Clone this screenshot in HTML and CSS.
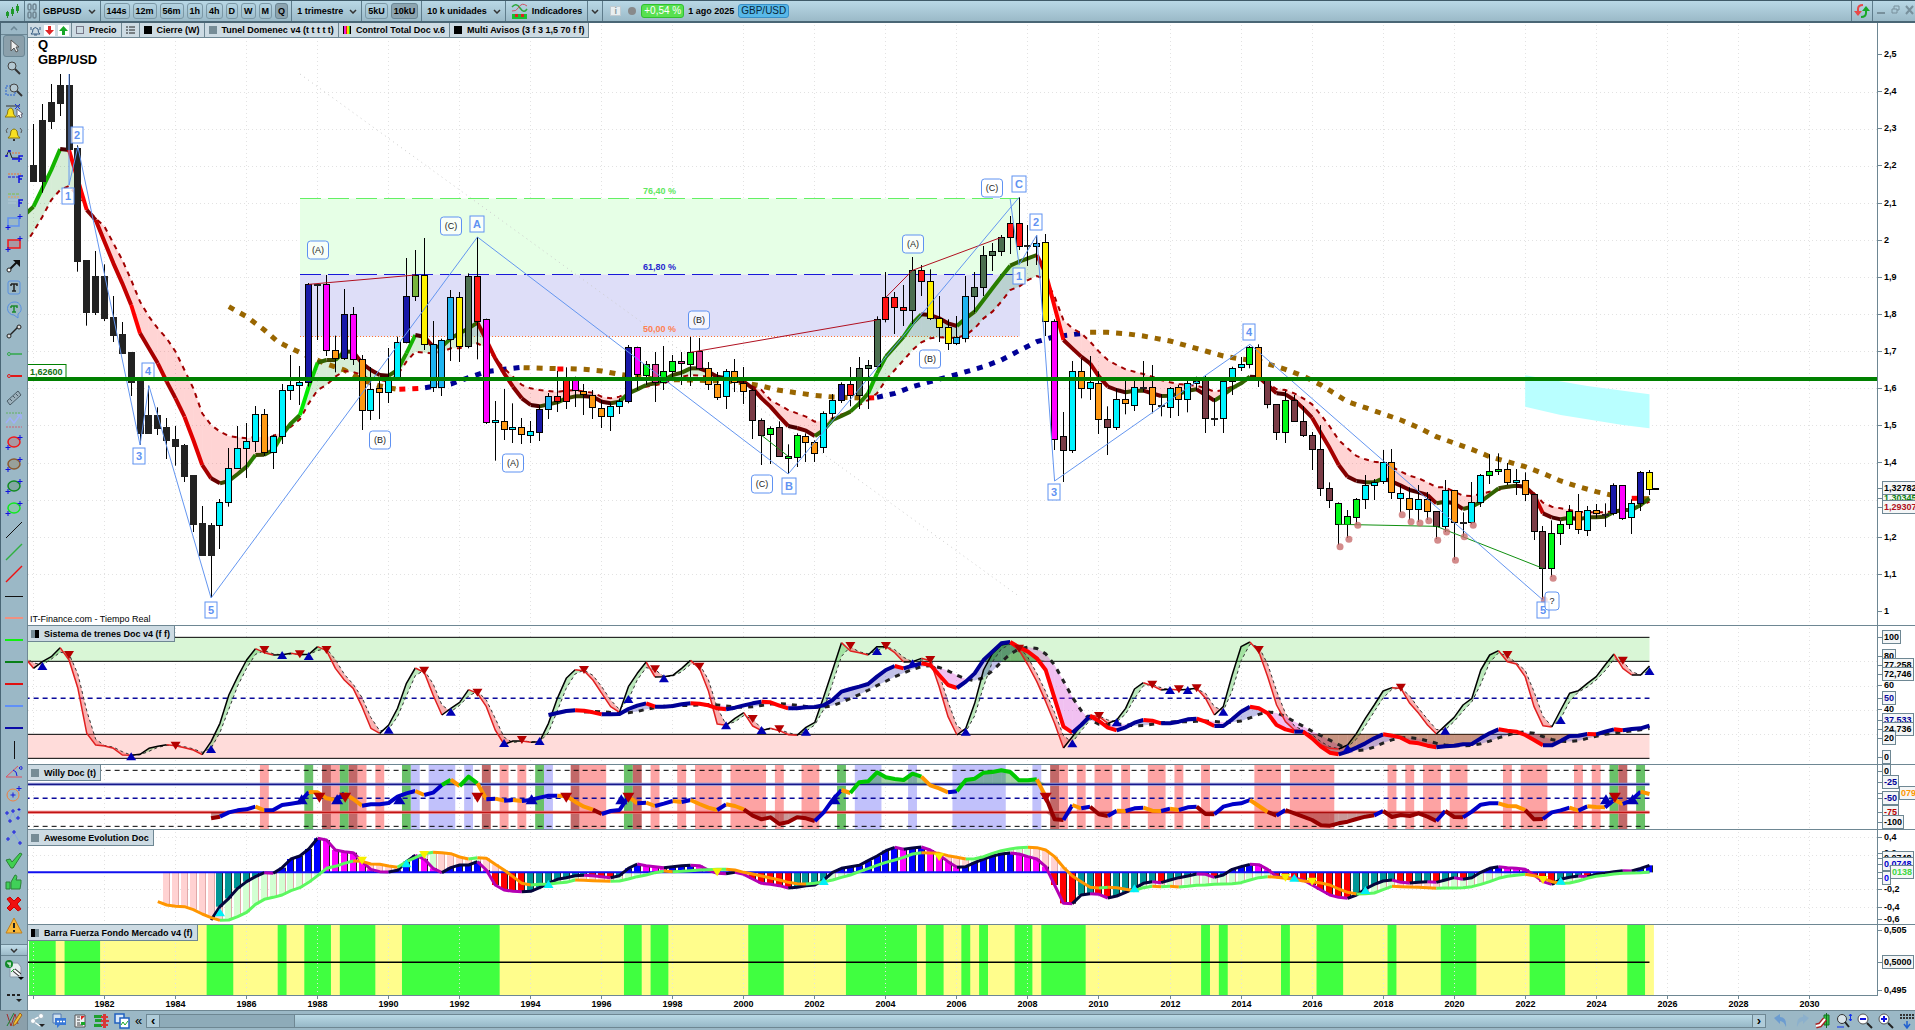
FILE: index.html
```html
<!DOCTYPE html>
<html lang="es">
<head>
    <meta charset="UTF-8">
    <meta name="viewport" content="width=device-width, initial-scale=1.0">
    <title>GBPUSD - 1 trimestre</title>
    <link rel="stylesheet" href="styles.css">
</head>
<body>

<!-- Top toolbar -->
<header class="toolbar">
    <button class="tool-cell type" aria-label="Tipo de gráfico"><svg width="16" height="16"><path d="M3.500 8v7M8.500 4v9M13.500 1v9" stroke="#2a8a2a"/><path d="M2 9h3v4H2zM7 6h3v5H7zM12 3h3v5h-3z" fill="#1f9a2c"/></svg></button>
    <button class="tool-cell link" aria-label="Vincular"><svg width="10" height="16"><g fill="none" stroke="#6f8592" stroke-width="1.500"><rect x="1" y="1" width="3" height="6" rx="1.500"/><rect x="6" y="1" width="3" height="6" rx="1.500"/><rect x="1" y="9" width="3" height="6" rx="1.500"/><rect x="6" y="9" width="3" height="6" rx="1.500"/></g></svg></button>
    <button class="tool-cell drop symbol">GBPUSD<svg class="chev"><path d="M1 1l3 3 3-3"/></svg></button>
    <div class="group frames">
        <button>144s</button><button>12m</button><button>56m</button><button>1h</button><button>4h</button><button>D</button><button>W</button><button>M</button><button class="on">Q</button>
    </div>
    <button class="tool-cell drop">1 trimestre<svg class="chev"><path d="M1 1l3 3 3-3"/></svg></button>
    <div class="group units"><button>5kU</button><button class="on">10kU</button></div>
    <button class="tool-cell drop">10 k unidades<svg class="chev"><path d="M1 1l3 3 3-3"/></svg></button>
    <button class="tool-cell indicators"><svg width="17" height="18"><path d="M1 5q4-5 8 1t7 1" fill="none" stroke="#2ea83c" stroke-width="1.500"/><path d="M1 9q4 1 7-4t8-1" fill="none" stroke="#d05060"/><path d="M1 12h15v5H1z" fill="#18c030"/><path d="M4 12h3v3H4zM10 12h3v3h-3z" fill="#e02020"/></svg>Indicadores</button>
    <button class="tool-cell arrow" aria-label="Más indicadores"><svg class="chev"><path d="M1 1l3 3 3-3"/></svg></button>
    <span class="info">i</span>
    <span class="dot"></span>
    <span class="change">+0,54 %</span>
    <span class="date">1 ago 2025</span>
    <span class="pair">GBP/USD</span>
    <span class="spacer"></span>
    <button class="tool-cell refresh" aria-label="Actualizar"><svg width="16" height="16"><path d="M4 9V6q0-4 5-4" fill="none" stroke="#e84848" stroke-width="2"/><path d="M0 8h8l-4 5z" fill="#e84848"/><path d="M12 7v3q0 4-5 4" fill="none" stroke="#18a828" stroke-width="2"/><path d="M8 8h8l-4-5z" fill="#18a828"/></svg></button>
    <div class="window-buttons">
        <button aria-label="Minimizar"><svg width="9" height="10"><path d="M0 8h8" stroke-width="2"/></svg></button>
        <button aria-label="Restaurar"><svg width="9" height="10"><path d="M3 4V1h5v4H6M1 4h5v4H1z"/></svg></button>
        <button aria-label="Cerrar"><svg width="9" height="10"><path d="M1 1l7 8M8 1L1 9" stroke-width="2"/></svg></button>
    </div>
</header>

<main class="workspace">
    <!-- Drawing tools -->
    <aside class="sidebar">
        <button class="scroll-up" aria-label="Subir"><svg class="chev"><path d="M1 4l3-3 3 3"/></svg></button>
        <div class="tools">
            <button class="on" aria-label="Cursor"><svg><path d="M6 3v11l3-3 2 4 2-1-2-4h3z" fill="#eee" stroke="#555"/></svg></button>
            <button aria-label="Lupa"><svg><circle cx="7" cy="7" r="4" fill="#b4c8d2" stroke="#444"/><path d="M10 10l5 5" stroke="#333" stroke-width="2"/></svg></button>
            <button aria-label="Zoom de zona"><svg><path d="M1 5h9v9H1z" fill="none" stroke="#2860d0" stroke-dasharray="2 1"/><circle cx="9" cy="7" r="4" fill="#b4c8d2" stroke="#444"/><path d="M12 10l5 5" stroke="#333" stroke-width="2"/></svg></button>
            <button aria-label="Alerta con cursor"><svg><path d="M0 14q3-2 3-7 3-4 5 0 0 5 3 7z" fill="#f8e020" stroke="#8a7810"/><path d="M1 3h14" stroke="#333"/><path d="M10 1l5 5M15 1l-5 5" stroke="#1a30e0"/><path d="M12 6v8l2-2 1 3 2-1-1-3h2z" fill="#fff" stroke="#667"/></svg></button>
            <button aria-label="Alerta"><svg><path d="M3 13q3-2 3-7 3-4 6 0 0 5 3 7z" fill="#f8e020" stroke="#8a7810"/><path d="M8 14h2v2H8z" fill="#333"/><path d="M3 3q-3 2-1 5M15 3q3 2 1 5" fill="none" stroke="#555"/></svg></button>
            <button aria-label="Fibonacci extensión"><svg><path d="M1 10L4 3l3 8h7" fill="none" stroke="#222"/><path d="M0 9h3M3 4h3M7 12h6" stroke="#1010e0" stroke-width="1.500"/><path d="M7 6h9" stroke="#f07030" stroke-dasharray="2 1"/><path d="M14 15V9h4M14 12h3" fill="none" stroke="#1010e0" stroke-width="1.500"/></svg></button>
            <button aria-label="Fibonacci retroceso"><svg><path d="M3 5h13" stroke="#f07030" stroke-dasharray="2 1"/><path d="M3 8h11" stroke="#1010e0" stroke-dasharray="3 1"/><path d="M14 14V7h4M14 10h3" fill="none" stroke="#1010e0" stroke-width="1.500"/></svg></button>
            <button aria-label="Fibonacci zonas"><svg><path d="M3 3h12" stroke="#80c040" stroke-dasharray="3 1"/><path d="M3 6h12" stroke="#f0a050" stroke-dasharray="2 1"/><path d="M3 9h10M3 12h8" stroke="#b0c8d4"/><path d="M14 16V9h4M14 12h3" fill="none" stroke="#1010e0" stroke-width="1.500"/></svg></button>
            <button aria-label="Rectángulo azul"><svg><path d="M3 5h11v8H3z" fill="none" stroke="#6090f0" stroke-width="1.500"/><path d="M15 1v5M12.500 3.500h5M3 12v5M.5 14.500h5" stroke="#1010e0"/></svg></button>
            <button aria-label="Rectángulo rojo"><svg><path d="M3 5h12v8H3z" fill="#a89aa4" stroke="#f01818" stroke-width="1.500"/><path d="M15 1v5M12.500 3.500h5M3 12v5M.5 14.500h5" stroke="#1010e0"/></svg></button>
            <button aria-label="Flecha"><svg><path d="M4 13l9-9" stroke="#111" stroke-width="2"/><path d="M8 3h7v7z" fill="#111"/><circle cx="4" cy="13" r="2" fill="#fff" stroke="#222"/></svg></button>
            <button aria-label="Texto"><svg><rect x="3" y="2" width="12" height="13" rx="2" fill="none" stroke="#5890e0"/><path d="M6 5h6v2M9 5v7M7 12h4M6 5v2" fill="none" stroke="#222" stroke-width="1.500"/></svg></button>
            <button aria-label="Comentario"><svg><path d="M9 1a6.500 6.500 0 0 1 4 12v4l-4-3A6.500 6.500 0 0 1 9 1z" fill="none" stroke="#5890e0"/><path d="M6 5h6v2M9 5v6M7 11h4M6 5v2" fill="none" stroke="#1c8a2c" stroke-width="1.500"/></svg></button>
            <button aria-label="Segmento"><svg><path d="M5 12l8-8" stroke="#222" stroke-width="1.500"/><circle cx="4" cy="13" r="2" fill="#ddd" stroke="#222"/><circle cx="14" cy="4" r="2" fill="#ddd" stroke="#222"/></svg></button>
            <button aria-label="Semirrecta verde"><svg><circle cx="4" cy="9" r="1.500" fill="none" stroke="#30a848"/><path d="M6 9h11" stroke="#30a848" stroke-width="1.500"/></svg></button>
            <button aria-label="Semirrecta roja"><svg><circle cx="4" cy="9" r="1.500" fill="none" stroke="#e01818"/><path d="M6 9h11" stroke="#e01818" stroke-width="2"/></svg></button>
            <button aria-label="Regla"><svg><path d="M2 12L13 2l3 4L5 16z" fill="#9cb0bb" stroke="#4a5c66"/><path d="M5 10l2 2M8 7l2 2M11 5l2 2" stroke="#4a5c66"/></svg></button>
            <button aria-label="Canal"><svg><path d="M1 2h16" stroke="#60b060" stroke-dasharray="2 1"/><path d="M1 16h16" stroke="#d06070" stroke-dasharray="2 1"/><path d="M1 12l4-5 4 5 6-8M12 4h4v4" fill="none" stroke="#a0b0f8" stroke-width="1.500"/></svg></button>
            <button aria-label="Elipse roja"><svg><ellipse cx="9" cy="9" rx="6" ry="5" fill="#a89aa2" stroke="#f01818" stroke-width="1.500"/><path d="M15 2v5M12.500 4.500h5M3 12v5M.5 14.500h5" stroke="#1010e0"/></svg></button>
            <button aria-label="Elipse marrón"><svg><ellipse cx="9" cy="9" rx="6" ry="5" fill="#98a09a" stroke="#8a5830" stroke-width="1.500"/><path d="M15 2v5M12.500 4.500h5M3 12v5M.5 14.500h5" stroke="#1010e0"/></svg></button>
            <button aria-label="Elipse verde"><svg><ellipse cx="9" cy="9" rx="6" ry="5" fill="#84a8a4" stroke="#108a20" stroke-width="1.500"/><path d="M15 2v5M12.500 4.500h5M3 12v5M.5 14.500h5" stroke="#1010e0"/></svg></button>
            <button aria-label="Elipse lima"><svg><ellipse cx="9" cy="9" rx="6" ry="5" fill="#8cc4ac" stroke="#10e820" stroke-width="1.500"/><path d="M15 2v5M12.500 4.500h5M3 12v5M.5 14.500h5" stroke="#1010e0"/></svg></button>
            <button aria-label="Línea negra"><svg><path d="M1 17L17 1" stroke="#111"/></svg></button>
            <button aria-label="Línea verde"><svg><path d="M1 17L17 1" stroke="#30b040" stroke-width="1.500"/></svg></button>
            <button aria-label="Línea roja"><svg><path d="M1 17L17 1" stroke="#f01010" stroke-width="1.500"/></svg></button>
            <button aria-label="Horizontal negra"><svg><path d="M0 9.500h18" stroke="#111"/></svg></button>
            <button aria-label="Horizontal salmón"><svg><path d="M0 9h18" stroke="#f09080" stroke-width="2"/></svg></button>
            <button aria-label="Horizontal lima"><svg><path d="M0 9h18" stroke="#10f010" stroke-width="2"/></svg></button>
            <button aria-label="Horizontal verde"><svg><path d="M0 9h18" stroke="#088018" stroke-width="2"/></svg></button>
            <button aria-label="Horizontal roja"><svg><path d="M0 9h18" stroke="#e01010" stroke-width="2"/></svg></button>
            <button aria-label="Horizontal azul"><svg><path d="M0 9h18" stroke="#6090f8" stroke-width="2"/></svg></button>
            <button aria-label="Horizontal marino"><svg><path d="M0 9h18" stroke="#0a0aa8" stroke-width="2"/></svg></button>
            <button aria-label="Vertical"><svg><path d="M9.500 0v18" stroke="#111"/></svg></button>
            <button aria-label="Ángulo"><svg><path d="M13 3L1 14h16" fill="none" stroke="#e05060"/><path d="M8 7q4 1 4 6M14 5q3-3 3 0t-3 0" fill="none" stroke="#1818e0"/></svg></button>
            <button aria-label="Ciclo"><svg><circle cx="8" cy="10" r="6" fill="none" stroke="#f08040"/><path d="M8 7.500v5M5.500 10h5M14 1v5M11.500 3.500h5" stroke="#1818e0"/></svg></button>
            <button aria-label="Ondas de Elliott"><svg><path d="M1 7l3 6 4-9 3 9 5-10" fill="none" stroke="#88a8e0"/><path d="M2 4v4M0 6h4M8 2v4M6 4h4M14 1v3M12.500 2.500h3M5 12v4M3 14h4M13 9v4M11 11h4" stroke="#1818e0"/></svg></button>
            <button aria-label="Ondas abc"><svg><path d="M1 13L9 4l6 10" fill="none" stroke="#88a8e0"/><path d="M3 8v4M1 10h4M9 1v4M7 3h4M15 12v4M13 14h4" stroke="#1818e0"/></svg></button>
            <button aria-label="Correcto"><svg><path d="M1 9l4-1 2 3 8-9 2 1-9 14H6z" fill="#40d050" stroke="#2c8038"/></svg></button>
            <button aria-label="Me gusta"><svg><path d="M1 9h4v7H1zM6 9l4-7q3 0 1 5h5v3l-1 6H6z" fill="#40d058" stroke="#2c8038"/></svg></button>
            <button aria-label="Borrar"><svg><path d="M2 4l3-2 4 4 4-4 3 3-4 4 4 5-3 2-4-4-4 4-3-3 4-4z" fill="#f01010" stroke="#c00"/></svg></button>
            <button aria-label="Aviso"><svg><path d="M9 1l8 15H1z" fill="#f8b838" stroke="#c08020"/><path d="M9 6v5M9 13v2" stroke="#222" stroke-width="2"/></svg></button>
            <button aria-label="Subida"><svg><path d="M9 5l5 6H4z" fill="#18b028"/></svg></button>
        </div>
        <button class="scroll-down" aria-label="Bajar"><svg class="chev"><path d="M1 1l3 3 3-3"/></svg></button>
        <button class="side-config" aria-label="Configurar herramientas"><svg width="20" height="22"><path d="M6 4h8l3 4v10H6z" fill="#e8eef0" stroke="#89a"/><circle cx="5" cy="5" r="4" fill="#138a2a"/><path d="M4 3v2h3M6 3v5" fill="none" stroke="#fff"/><path d="M7 13l3-3 2 2" fill="none" stroke="#2a3"/><path d="M10 11l6 5" stroke="#333" stroke-width="4"/><path d="M10 11l6 5" stroke="#fff" stroke-width="2"/><path d="M14 18h6l-3 3z"/></svg></button>
        <button class="side-more" aria-label="Más"><svg width="18" height="12"><path d="M2 3h3v2H2zM7 3h3v2H7zM12 3h3v2h-3zM11 8h6l-3 3z" fill="#222"/></svg></button>
    </aside>

    <!-- Chart panes -->
    <section class="charts">
        <div class="pane price">
            <svg class="plot" id="price"></svg><svg class="scale" id="price-scale"></svg>
            <div class="legend">
                <span class="legend-item icons">
                    <svg width="11" height="11"><path d="M1 9q2-1 2-5 2-3 5 0 0 4 2 5zM4 10h3M1 2v3M10 2v3" fill="none" stroke="#345a80"/></svg>
                    <svg width="11" height="11"><path d="M0 0h11v11H0z" fill="#fff"/><path d="M4 1h3v4h3L5.500 10 1 5h3z" fill="#e02828"/></svg>
                    <svg width="11" height="11"><path d="M0 0h11v11H0z" fill="#fff"/><path d="M4 10h3V6h3L5.500 1 1 6h3z" fill="#18a828"/></svg>
                </span>
                <label class="legend-item"><input type="checkbox">Precio</label>
                <span class="legend-item"><svg width="9" height="9"><path d="M0 1h2M0 4h2M0 7h2M3 1h6M3 4h6M3 7h6" stroke="#222"/></svg></span>
                <span class="legend-item"><i class="swatch black"></i>Cierre (W)</span>
                <span class="legend-item"><i class="swatch slate"></i>Tunel Domenec v4 (t t t t t)</span>
                <span class="legend-item"><i class="swatch rainbow"></i>Control Total Doc v.6</span>
                <span class="legend-item"><i class="swatch black"></i>Multi Avisos (3 f 3 1,5 70 f f)</span>
            </div>
            <h1 class="heading">Q<br>GBP/USD</h1>
            <p class="credit">IT-Finance.com - Tiempo Real</p>
        </div>
        <div class="pane trenes">
            <svg class="plot" id="trenes"></svg><svg class="scale" id="trenes-scale"></svg>
            <div class="legend"><span class="legend-item"><i class="swatch half"></i>Sistema de trenes Doc v4 (f f)</span></div>
        </div>
        <div class="pane willy">
            <svg class="plot" id="willy"></svg><svg class="scale" id="willy-scale"></svg>
            <div class="legend"><span class="legend-item"><i class="swatch slate"></i>Willy Doc (t)</span></div>
        </div>
        <div class="pane awesome">
            <svg class="plot" id="awesome"></svg><svg class="scale" id="awesome-scale"></svg>
            <div class="legend"><span class="legend-item"><i class="swatch slate"></i>Awesome Evolution Doc</span></div>
        </div>
        <div class="pane barra">
            <svg class="plot" id="barra"></svg><svg class="scale" id="barra-scale"></svg>
            <div class="legend"><span class="legend-item"><i class="swatch half rev"></i>Barra Fuerza Fondo Mercado v4 (f)</span></div>
        </div>
        <svg class="time-axis" id="time-axis"></svg>
    </section>
</main>

<!-- Bottom bar -->
<footer class="bottom">
    <button class="pencil" aria-label="Dibujo"><svg width="18" height="18"><path d="M2 3l4 12 4-12 3 10" fill="none" stroke="#a03030"/><path d="M2 15L9 2" stroke="#208030"/><path d="M8 15l1-4 6-9 2 2-6 9z" fill="#f0c030" stroke="#a06020"/></svg></button>
    <div class="bottom-icons">
        <button aria-label="Compartir"><svg width="16" height="16"><path d="M3 7l8-4M3 8l7 5" stroke="#fff" stroke-width="1.500"/><circle cx="3" cy="8" r="2.500" fill="#fff" stroke="#a0b4c0"/><circle cx="11" cy="3" r="2.500" fill="#fff" stroke="#a0b4c0"/><path d="M9 11h6l-3 3z" fill="#222"/></svg></button>
        <button aria-label="Chat"><svg width="16" height="16"><path d="M2 1h8v9H2z" fill="#cfe0ee" stroke="#5078b0"/><path d="M4 5h11v7h-6l-3 3v-3H4z" fill="#3878d8"/><path d="M6 8.500h2M9 8.500h2M12 8.500h2" stroke="#fff" stroke-width="1.500"/></svg></button>
        <button aria-label="Notas"><svg width="16" height="16"><path d="M3 2h10v12H3z" fill="#eef2f4" stroke="#555"/><path d="M5 4h3M5 7h3M5 10h3M5 12h6" stroke="#444"/><path d="M9 3h4l-4 4z" fill="#e02020"/><path d="M9 9h4v3H9z" fill="#18a828"/></svg></button>
        <button aria-label="Órdenes"><svg width="16" height="16"><path d="M1 2h8v3H1zM2 6h7v3H2zM1 11h8v3H1z" fill="#20a030"/><path d="M10 1h3v14h-3zM8 3h7v2H8zM8 7h8v2H8zM8 11h7v2H8z" fill="#d83838"/></svg></button>
        <button aria-label="Ventanas"><svg width="16" height="16"><path d="M1 1h9v9H1z" fill="#d8e8f8" stroke="#2060c0" stroke-width="1.500"/><path d="M6 5h9v10H6z" fill="#fff" stroke="#2060c0" stroke-width="1.500"/><path d="M7 12l2-3 2 3 3-4" fill="none" stroke="#18a828"/></svg></button>
        <span class="collapse">«</span>
    </div>
    <div class="scrollbar">
        <button aria-label="Izquierda">‹</button>
        <div class="track"><div class="thumb"></div></div>
        <button aria-label="Derecha">›</button>
    </div>
    <div class="zoom-icons">
        <button aria-label="Deshacer"><svg width="16" height="16"><path d="M1 5l6-4v3q7 0 6 10-2-6-6-6v3z" fill="#6c9cd0"/></svg></button>
        <button aria-label="Rehacer"><svg width="16" height="16"><path d="M15 5L9 1v3Q2 4 3 14q2-6 6-6v3z" fill="#8cb0cc"/></svg></button>
        <button aria-label="Ajustes"><svg width="16" height="16"><path d="M9 2h5v10H9zM11.500 0v15" fill="#30c040" stroke="#107020"/><path d="M1 13l4-1 5-6" fill="none" stroke="#a22" stroke-width="5"/><path d="M1 13l4-1 5-6" fill="none" stroke="#fff" stroke-width="2"/></svg></button>
        <button aria-label="Ajustar zoom"><svg width="16" height="16"><circle cx="6" cy="6" r="4.500" fill="#d8e4ea" stroke="#333"/><path d="M9 9l4 5" stroke="#222" stroke-width="2"/><path d="M14.500 1v7M13 3l1.500-2L16 3M13 6l1.500 2L16 6M1 14h7" fill="none" stroke="#1030f0"/></svg></button>
        <button aria-label="Alejar"><svg width="16" height="16"><circle cx="6" cy="6" r="5" fill="#fff" stroke="#555"/><path d="M3 6h6" stroke="#1010e0" stroke-width="2"/><path d="M10 10l5 5" stroke="#222" stroke-width="2"/></svg></button>
        <button aria-label="Acercar"><svg width="16" height="16"><circle cx="6" cy="6" r="5" fill="#fff" stroke="#555"/><path d="M3 6h6M6 3v6" stroke="#1010e0" stroke-width="2"/><path d="M10 10l5 5" stroke="#222" stroke-width="2"/></svg></button>
        <button aria-label="Columnas"><svg width="16" height="16"><path d="M1 2h14M1 5h14" stroke="#333" stroke-width="2" stroke-dasharray="2 1"/><path d="M8 8v6M5 11l3 4 3-4" fill="none" stroke="#2060d0" stroke-width="1.500"/></svg></button>
    </div>
</footer>

<script src="chart.js"></script>
</body>
</html>
```
FILE: styles.css
```css
* {
    box-sizing: border-box;
}

html, body {
    height: 100%;
    margin: 0;
}

body {
    display: flex;
    flex-direction: column;
    overflow: hidden;
    background: #fff;
    color: #000;
    font-family: "Liberation Sans", Arial, sans-serif;
    font-size: 9px;
    font-weight: bold;
}

button {
    margin: 0;
    padding: 0;
    border: 0;
    background: none;
    color: inherit;
    font: inherit;
}

svg {
    flex: none;
}

.chev {
    width: 8px;
    height: 5px;
    fill: none;
    stroke: #333;
    stroke-width: 1.5px;
}

/* Top toolbar */
.toolbar {
    display: flex;
    align-items: center;
    height: 23px;
    flex: none;
    border-top: 1px solid #3f5a68;
    border-bottom: 2px solid #4a6675;
    background: linear-gradient(#b9d8e6, #9bbac8);
}

.tool-cell {
    display: flex;
    align-items: center;
    justify-content: center;
    flex: none;
    height: 100%;
    padding: 0 4px;
    border-right: 1px solid #5e7c8b;
}

.link {
    padding: 0 2px;
}

.drop {
    gap: 6px;
    padding: 0 4px 0 5px;
}

.symbol {
    padding: 0 4px 0 3px;
}

.group {
    display: flex;
    align-items: center;
    gap: 3px;
    height: 100%;
    padding: 0 3px;
    border-right: 1px solid #5e7c8b;
}

.group button {
    height: 16px;
    padding: 0 2px;
    border: 1px solid #7b98a6;
    border-radius: 3px;
}

.group .on {
    background: #8ca4b0;
    border-color: #6b8795;
}

.indicators {
    gap: 4px;
    padding: 0 5px;
}

.arrow {
    padding: 0 3px;
}

.info {
    margin-left: 7px;
    width: 11px;
    height: 10px;
    border: 1px solid #c0ccd2;
    background: #e8eef0;
    color: #8898a0;
    line-height: 9px;
    text-align: center;
}

.dot {
    width: 8px;
    height: 8px;
    margin: 0 5px 0 7px;
    border-radius: 50%;
    background: #88898a;
}

.change, .pair {
    height: 14px;
    padding: 0 2px;
    border: 1px solid #30c030;
    border-radius: 3px;
    background: #58e050;
    color: #fff;
    font-size: 10px;
    font-weight: normal;
    line-height: 12px;
}

.date {
    margin: 0 4px;
}

.pair {
    border-color: #3890c8;
    background: #58b8e8;
    color: #08283c;
}

.spacer {
    flex: 1;
}

.refresh {
    padding: 0 2px;
    border-left: 1px solid #5e7c8b;
}

.window-buttons {
    display: flex;
    gap: 5px;
    padding: 0 1px 0 4px;
}

.window-buttons svg {
    fill: none;
    stroke: #78909c;
}

/* Main area */
.workspace {
    display: flex;
    flex: 1;
    min-height: 0;
}

.sidebar {
    display: flex;
    flex-direction: column;
    flex: none;
    width: 28px;
    border-left: 1px solid #4a6675;
    border-right: 1px solid #708894;
    background: #9bb8c6;
}

.scroll-up, .scroll-down {
    display: flex;
    align-items: center;
    justify-content: center;
    flex: none;
    height: 12px;
    border-top: 1px solid #6b8795;
    border-bottom: 1px solid #6b8795;
}

.scroll-up {
    border-top: 0;
}

.scroll-up .chev {
    stroke: #6b8795;
}

.scroll-down {
    background: linear-gradient(#c0dde9, #9bbac8);
}

.tools {
    display: flex;
    flex-direction: column;
    flex: 1;
    align-items: center;
    min-height: 0;
    overflow: hidden;
}

.tools button {
    display: flex;
    align-items: center;
    justify-content: center;
    flex: none;
    width: 22px;
    height: 22px;
}

.tools .on {
    border: 1px solid #6b8795;
    border-radius: 3px;
    background: #8ba0ab;
}

.tools svg {
    width: 18px;
    height: 18px;
}

.side-config {
    flex: none;
    height: 30px;
}

.side-more {
    flex: none;
    height: 24px;
}

.charts {
    display: flex;
    flex-direction: column;
    flex: 1;
    min-width: 0;
}

.pane {
    display: flex;
    position: relative;
    flex: none;
    overflow: hidden;
    border-bottom: 1px solid #6e8793;
}

.price {
    flex: 1;
}

.trenes {
    height: 139px;
}

.willy {
    height: 65px;
}

.awesome {
    height: 95px;
}

.barra {
    height: 71px;
    border-bottom: 0;
}

.plot {
    flex: 1;
    min-width: 0;
    height: 100%;
}

.scale {
    width: 38px;
    height: 100%;
    border-left: 1px solid #6e8793;
}

.plot text, .scale text, .time-axis text {
    font-family: "Liberation Sans", Arial, sans-serif;
}

.time-axis {
    width: 100%;
    height: 14px;
}

/* Legends drawn over the panes */
.legend {
    position: absolute;
    top: 0;
    left: 0;
    display: flex;
    height: 15px;
    border-right: 1px solid #6e8793;
    border-bottom: 1px solid #6e8793;
    background: #cddbe3;
}

.pane:not(.price) .legend {
    height: 16px;
}

.legend-item {
    display: flex;
    align-items: center;
    gap: 5px;
    padding: 0 4px 0 3px;
    white-space: nowrap;
}

.legend-item + .legend-item {
    border-left: 1px solid #6e8793;
}

.price .legend-item + .legend-item {
    padding: 0 4px;
}

.price .icons {
    gap: 3px;
    padding: 0 2px;
}

.legend input {
    appearance: none;
    width: 8px;
    height: 8px;
    margin: 0;
    border: 1px solid #778;
}

.swatch {
    width: 8px;
    height: 8px;
}

.black {
    background: #000;
}

.slate {
    background: #768c96;
}

.rainbow {
    background: linear-gradient(90deg, #000 1px, #f020d0 1px 3px, #f01010 3px 4px, #f0e000 4px 6px, #20d020 6px 7px, #000 7px);
}

.half {
    background: linear-gradient(90deg, #768c96 4px, #000 4px);
}

.rev {
    background: linear-gradient(90deg, #000 4px, #768c96 4px);
}

.heading {
    position: absolute;
    top: 14px;
    left: 10px;
    margin: 0;
    font-size: 13px;
    line-height: 15px;
}

.credit {
    position: absolute;
    bottom: 0;
    left: 2px;
    margin: 0;
    font-weight: normal;
    line-height: 11px;
}

/* Bottom bar */
.bottom {
    display: flex;
    align-items: center;
    flex: none;
    height: 20px;
    border-top: 1px solid #6e8793;
    background: #9bb8c6;
}

.pencil {
    width: 28px;
    height: 19px;
    border-right: 1px solid #708894;
    background: #8ba0ab;
}

.bottom-icons {
    display: flex;
    align-items: center;
    gap: 5px;
    padding: 0 4px 0 2px;
}

.bottom-icons button, .zoom-icons button {
    height: 16px;
}

.collapse {
    font-size: 13px;
    font-weight: normal;
    line-height: 16px;
}

.scrollbar {
    display: flex;
    flex: 1;
    height: 14px;
    border: 1px solid #6e8793;
    background: #8eabb9;
}

.scrollbar button {
    width: 12px;
    background: #b0ccd9;
    font-size: 13px;
    line-height: 10px;
}

.track {
    display: flex;
    flex: 1;
    justify-content: flex-end;
    border-left: 1px solid #6e8793;
    border-right: 1px solid #6e8793;
}

.thumb {
    width: 91.6%;
    border-left: 1px solid #6e8793;
    background: linear-gradient(#b9d9e5, #97b8c7);
}

.zoom-icons {
    display: flex;
    gap: 5px;
    padding: 0 0 0 7px;
}
```
FILE: chart.js
```javascript
// Bar spacing in pixels; index 0 is the first quarter of 1980
const STEP = 8.879;
const X = i => 5.5 + STEP * i;
const LAST = 182;

const NS = 'http://www.w3.org/2000/svg';

function add(parent, tag, attrs, text) {
    const el = document.createElementNS(NS, tag);
    for (const k in attrs) el.setAttribute(k, attrs[k]);
    if (text !== undefined) el.textContent = text;
    parent.appendChild(el);
    return el;
}

// Each pane keeps its own offset; levels are stored in thirds of a pixel
function pane(id, top) {
    return { svg: document.getElementById(id), scale: document.getElementById(id + '-scale'), Y: u => u / 3 - top };
}

function line(p, i1, y1, i2, y2, stroke, width, dash) {
    return add(p.svg, 'line', { x1: X(i1), y1: p.Y(y1), x2: X(i2), y2: p.Y(y2), stroke, 'stroke-width': width || 1, 'stroke-dasharray': dash || 'none' });
}

function level(p, u, stroke, width, dash) {
    return line(p, -1, u, LAST, u, stroke, width, dash);
}

function grid(p, levels) {
    for (let i = 0; i <= 208; i += 8)
        add(p.svg, 'line', { x1: Math.floor(X(i)) + 0.5, x2: Math.floor(X(i)) + 0.5, y1: 2, y2: '100%', stroke: '#e2e2e2', 'stroke-dasharray': '1 3' });
    levels.forEach(u => {
        const y = Math.floor(p.Y(u)) + 0.5;
        add(p.svg, 'line', { x1: 0, x2: '100%', y1: y, y2: y, stroke: '#e2e2e2', 'stroke-dasharray': '1 3' });
    });
}

function poly(p, pts, attrs) {
    return add(p.svg, 'polyline', Object.assign({ points: pts.map(q => X(q[0]) + ',' + p.Y(q[1])).join(' '), fill: 'none' }, attrs));
}

function zone(p, from, to, fill) {
    add(p.svg, 'rect', { x: X(from - 0.5), y: 0, width: STEP * (to - from + 1), height: '100%', fill });
}

// Coloured series, consecutive segments of one colour joined in one polyline
function series(p, data, start, width, color) {
    let run = [[start, data[0]]], last = null;
    for (let k = 1; k < data.length; k++) {
        const c = color(data[k], data[k - 1]);
        if (last && c !== last) {
            poly(p, run, { stroke: last, 'stroke-width': width, 'stroke-linejoin': 'round' });
            run = [run[run.length - 1]];
        }
        run.push([start + k, data[k]]);
        last = c;
    }
    poly(p, run, { stroke: last, 'stroke-width': width, 'stroke-linejoin': 'round' });
}

function between(p, a, b, start, above, below) {
    for (let k = 1; k < a.length; k++) {
        const pts = [[start + k - 1, a[k - 1]], [start + k, a[k]], [start + k, b[k]], [start + k - 1, b[k - 1]]];
        poly(p, pts, { fill: a[k] + a[k - 1] < b[k] + b[k - 1] ? above : below });
    }
}

function triangle(p, i, u, up, fill, r) {
    const x = X(i), y = p.Y(u), d = up ? 1 - r : r - 1;
    add(p.svg, 'path', { d: `M${x - r} ${y - d}H${x + r}L${x} ${y + d}z`, fill });
}

function average(data, n) {
    return data.map((v, k) => {
        const part = data.slice(Math.max(0, k - n + 1), k + 1);
        return part.reduce((s, x) => s + x, 0) / part.length;
    });
}

// Scale labels: [text, y in page pixels, colour, boxed, left offset]
function labels(p, top, list) {
    list.forEach(([text, y, color, boxed, dx]) => {
        const w = 3 + text.replace(/[-,]/g, '').length * 5 + (/[-,]/.test(text) ? 3 : 0);
        add(p.scale, 'path', { d: `M0 ${y - top + 0.5}h4`, stroke: '#6e8793' });
        if (boxed) add(p.scale, 'rect', { x: 4.5 + (dx || 0), y: y - top - 6.5, width: w, height: 13, fill: '#f4f6f7', stroke: '#6e8793' });
        add(p.scale, 'text', { x: 6 + (dx || 0), y: y - top + 3, fill: color || '#000' }, text);
    });
}

/* ---------- Price ---------- */
const price = pane('price', 23);
const COLORS = {
    k: '#222', c: '#00f4ff', o: '#ff9914', m: '#ff00ff', b: '#1818a8', y: '#fff200', g: '#00f818', G: '#4c6f50',
    r: '#ff1414', s: '#1eb4f0', p: '#e03c96', n: '#7a3c46', l: '#78b43c'
};

// high, body top, body bottom, low, colour
const CANDLES = `372 495 543 545 k|312 360 543 578 k|252 306 363 387 k|222 255 309 348 k|222 255 447 447 k|436 444 783 815 k|780 780 936 977 k|753 828 936 945 k|793 828 954 963 k|888 951 1005 1026 k
966 1002 1059 1059 k|1057 1057 1145 1188 k|1143 1143 1298 1335 k|1157 1245 1298 1298 k|1222 1245 1284 1305 k|1254 1281 1320 1377 k|1278 1317 1338 1397 k|1332 1335 1428 1446 k|1425 1425 1572 1596 k|1518 1569 1665 1665 k
1569 1575 1665 1794 k|1497 1505 1576 1647 c|1344 1405 1505 1520 c|1278 1345 1405 1405 c|1269 1324 1345 1434 c|1218 1243 1324 1356 c|1227 1243 1357 1368 o|1304 1309 1357 1407 c|1152 1171 1309 1332 c|1065 1156 1171 1200 c
1098 1147 1156 1215 c|849 853 1147 1160 b|853 853 855 1020 k|825 853 1051 1068 m|1007 1051 1075 1117 o|867 943 1075 1080 b|921 943 1078 1095 m|1065 1078 1231 1290 o|1101 1166 1231 1260 c|1140 1165 1177 1257 o
1044 1137 1177 1209 c|1010 1027 1137 1140 c|774 889 1027 1030 b|750 825 889 903 l|714 825 1033 1050 y|963 1033 1162 1176 s|1016 1020 1162 1188 s|870 892 1018 1083 s|876 892 1038 1086 y|820 829 1038 1045 G
711 829 962 1078 r|956 958 1266 1272 m|1203 1260 1267 1382 c|1167 1264 1288 1320 o|1210 1282 1288 1329 c|1254 1282 1303 1332 o|1263 1294 1306 1329 c|1215 1228 1297 1323 b|1179 1189 1228 1257 s|1113 1189 1204 1236 r
1102 1138 1204 1227 r|1130 1138 1171 1221 m|1152 1174 1183 1245 o|1170 1186 1222 1257 o|1200 1225 1249 1284 o|1207 1219 1249 1293 c|1195 1204 1219 1242 c|1035 1042 1204 1210 b|1040 1042 1123 1170 m|1083 1093 1126 1155 g
1056 1093 1147 1206 p|1038 1114 1147 1170 g|1065 1084 1114 1140 g|1056 1084 1090 1155 p|1011 1057 1093 1158 g|1014 1054 1105 1110 p|1086 1105 1153 1170 o|1116 1153 1192 1200 o|1107 1114 1189 1227 c|1077 1114 1147 1176 o
1101 1150 1174 1212 o|1165 1171 1261 1317 n|1255 1261 1306 1395 n|1279 1285 1303 1392 g|1264 1282 1369 1371 n|1333 1369 1375 1422 g|1300 1306 1372 1401 g|1300 1309 1327 1386 o|1321 1327 1360 1386 o|1234 1240 1342 1359 c
1182 1201 1240 1258 c|1147 1153 1201 1209 b|1101 1153 1186 1219 r|1071 1105 1186 1227 G|1080 1096 1105 1227 G|949 958 1099 1105 G|816 892 958 967 r|876 892 922 1002 r|855 922 931 978 r|771 811 931 972 G
795 811 844 888 r|808 844 955 960 y|888 955 982 1026 y|958 982 1030 1050 y|948 1012 1030 1035 s|828 889 1015 1027 s|816 862 889 937 G|738 766 862 888 G|729 754 766 813 G|705 712 754 768 G
648 670 712 762 r|592 670 739 750 r|675 736 739 798 k|705 730 739 795 s|702 727 964 1008 y|958 964 1318 1350 m|1236 1309 1351 1446 n|1083 1114 1351 1359 c|1077 1114 1165 1195 o|1068 1147 1165 1200 c
1114 1150 1258 1302 o|1219 1258 1282 1365 n|1165 1198 1282 1290 c|1141 1198 1210 1243 o|1134 1162 1216 1233 c|1083 1161 1163 1176 k|1095 1162 1213 1240 o|1182 1215 1217 1249 k|1161 1165 1222 1254 c|1155 1162 1198 1248 o
1134 1150 1198 1237 c|1130 1143 1150 1170 c|1128 1141 1255 1299 n|1195 1254 1256 1278 k|1138 1144 1255 1299 c|1100 1105 1144 1185 c|1071 1093 1102 1113 c|1038 1042 1093 1105 g|1033 1042 1138 1161 o|1138 1141 1213 1225 n
1213 1213 1297 1320 n|1173 1201 1297 1329 g|1185 1201 1264 1264 n|1218 1264 1306 1311 n|1296 1306 1348 1410 n|1275 1348 1465 1488 n|1447 1465 1501 1524 n|1507 1510 1573 1635 g|1530 1549 1573 1614 g|1494 1498 1552 1573 g
1425 1456 1498 1527 c|1437 1446 1456 1500 c|1350 1387 1444 1452 c|1347 1387 1477 1497 o|1455 1480 1495 1537 c|1462 1495 1528 1560 o|1455 1498 1528 1566 c|1476 1498 1534 1560 o|1534 1534 1579 1617 n|1440 1471 1579 1596 c
1471 1471 1567 1680 o|1537 1566 1568 1610 k|1446 1507 1567 1573 c|1422 1426 1507 1521 c|1363 1414 1426 1452 g|1360 1408 1414 1425 g|1389 1408 1447 1455 o|1407 1441 1447 1485 c|1417 1441 1483 1503 o|1483 1483 1594 1620 n
1578 1594 1705 1800 n|1561 1600 1705 1731 g|1561 1573 1600 1635 g|1515 1534 1573 1587 g|1482 1534 1588 1602 o|1518 1531 1591 1608 c|1512 1531 1540 1555 o|1510 1541 1543 1581 k|1450 1456 1540 1546 b|1456 1456 1555 1560 m
1498 1510 1552 1602 c|1413 1417 1510 1533 b|1410 1417 1468 1485 y`.split(/[|\n]/).map(r => r.split(' '));

// Averages start one bar before the visible range
const FAST = [645,
    620, 565, 510, 447, 450, 540, 630, 660, 725, 790, 850, 915, 1000, 1045, 1090, 1145, 1195, 1250, 1320, 1395,
    1435, 1450, 1443, 1422, 1400, 1365, 1364, 1350, 1305, 1270, 1245, 1160, 1088, 1080, 1080, 1055, 1055, 1090, 1110, 1125,
    1127, 1110, 1060, 1005, 1010, 1040, 1040, 1015, 1000, 985, 968, 1020, 1075, 1120, 1160, 1195, 1215, 1219, 1213, 1207,
    1195, 1189, 1189, 1190, 1205, 1210, 1205, 1180, 1168, 1155, 1150, 1140, 1125, 1118, 1105, 1105, 1115, 1130, 1135, 1140,
    1145, 1165, 1195, 1220, 1250, 1278, 1284, 1292, 1308, 1290, 1260, 1248, 1235, 1210, 1180, 1120, 1070, 1040, 1010, 970,
    943, 945, 955, 970, 978, 955, 935, 900, 865, 830, 797, 785, 775, 765, 820, 920, 1020, 1045, 1070, 1090,
    1130, 1160, 1170, 1177, 1172, 1172, 1180, 1188, 1187, 1182, 1172, 1168, 1185, 1202, 1185, 1165, 1150, 1130, 1132, 1155,
    1180, 1183, 1200, 1225, 1253, 1300, 1345, 1395, 1430, 1443, 1447, 1447, 1435, 1445, 1457, 1470, 1477, 1485, 1510, 1505,
    1510, 1527, 1520, 1505, 1485, 1465, 1460, 1457, 1460, 1485, 1540, 1552, 1558, 1553, 1558, 1552, 1552, 1550, 1535, 1530,
    1530, 1515, 1495];
const SLOW = [735,
    695, 650, 600, 570, 558, 590, 625, 655, 680, 730, 780, 840, 905, 950, 985, 1015, 1055, 1110, 1165, 1240,
    1275, 1295, 1308, 1312, 1315, 1310, 1312, 1308, 1295, 1280, 1258, 1210, 1170, 1155, 1130, 1113, 1116, 1125, 1140, 1140,
    1145, 1125, 1085, 1055, 1058, 1060, 1055, 1045, 1045, 1035, 1030, 1045, 1075, 1105, 1130, 1155, 1165, 1170, 1173, 1176,
    1172, 1170, 1175, 1178, 1190, 1195, 1190, 1175, 1170, 1160, 1156, 1150, 1140, 1130, 1125, 1127, 1130, 1133, 1135, 1140,
    1145, 1160, 1170, 1200, 1215, 1230, 1240, 1250, 1265, 1262, 1255, 1243, 1235, 1215, 1200, 1180, 1140, 1110, 1080, 1050,
    1027, 1015, 1012, 1013, 1013, 1005, 985, 955, 935, 905, 870, 860, 840, 828, 838, 890, 960, 985, 1000, 1025,
    1055, 1080, 1095, 1108, 1115, 1122, 1130, 1140, 1147, 1152, 1155, 1157, 1165, 1175, 1170, 1160, 1150, 1135, 1140, 1150,
    1167, 1170, 1180, 1195, 1213, 1245, 1280, 1320, 1345, 1368, 1378, 1385, 1388, 1400, 1415, 1427, 1435, 1447, 1462, 1462,
    1475, 1487, 1488, 1482, 1475, 1470, 1462, 1460, 1462, 1480, 1508, 1520, 1525, 1530, 1535, 1537, 1537, 1537, 1533, 1530,
    1528, 1518, 1505];

// Long average, one entry per colour
const LONG = [
    ['#996600', [[22, 920], [24, 950], [26, 990], [27.5, 1025], [29, 1045], [31, 1070], [33, 1092], [35, 1110], [37, 1140], [39, 1158], [41, 1168]]],
    ['#ff0000', [[41.2, 1168], [44, 1165]]],
    ['#000096', [[44.1, 1163], [47, 1152], [49, 1133], [51, 1115], [53, 1108], [55, 1102]]],
    ['#996600', [[55.2, 1103], [59, 1106]]],
    ['#ff0000', [[59, 1107], [59.8, 1107]]],
    ['#996600', [[60.5, 1106], [62, 1108], [64, 1113], [66, 1123], [70, 1138], [74, 1140], [78, 1143], [80, 1148], [82, 1158], [84, 1171], [88, 1186], [90, 1191], [93.5, 1194]]],
    ['#ff0000', [[94, 1194], [94.8, 1193]]],
    ['#000096', [[95, 1192], [97, 1180], [99, 1160], [101, 1145], [104, 1123], [107, 1100], [109, 1080], [111, 1052], [113, 1025], [115, 1010], [118.5, 999]]],
    ['#996600', [[119, 997], [121, 997], [123, 1001], [125, 1008], [128, 1023], [132, 1053], [134, 1068], [136, 1077], [138, 1083], [141, 1108], [143, 1128], [145, 1155], [148, 1205], [150, 1223], [154, 1260], [156, 1283], [158, 1310], [162, 1348], [164, 1370], [168, 1400], [170, 1420], [172, 1443], [174, 1460], [176, 1475], [178, 1487]]],
    ['#ff0000', [[180, 1495], [180.8, 1495]]],
    ['#996600', [[181.3, 1496], [182, 1496]]]
];

function drawPrice() {
    const p = price, s = p.svg;
    grid(p, [277, 388, 499, 610, 721, 832, 943, 1054, 1165, 1276, 1389, 1500, 1612, 1723]);

    // Fibonacci bands
    add(s, 'rect', { x: 272, y: 175.5, width: 720, height: 76, fill: '#e6ffe6' });
    add(s, 'rect', { x: 272, y: 251.5, width: 720, height: 62, fill: '#dedef8' });
    add(s, 'path', { d: 'M272 51L992 574', stroke: '#ccc', 'stroke-dasharray': '1 4', fill: 'none' });
    add(s, 'path', { d: 'M272 175.500H992', stroke: '#64f064', 'stroke-dasharray': '21 7' });
    add(s, 'path', { d: 'M272 251.500H992', stroke: '#1818d8', 'stroke-dasharray': '21 7' });
    add(s, 'path', { d: 'M272 313.500H992', stroke: '#ff7030', 'stroke-dasharray': '1 2' });
    poly(p, [[168, 1126], [175, 1158], [182, 1183], [182, 1285], [179, 1275], [172, 1245], [168, 1220]], { fill: '#b9ffff' });

    between(p, FAST, SLOW, -1, 'rgba(0,140,0,.16)', 'rgba(255,0,0,.17)');
    LONG.forEach(([stroke, pts]) => poly(p, pts, { stroke, 'stroke-width': 5, 'stroke-dasharray': '6 7' }));
    poly(p, SLOW.map((v, k) => [k - 1, v]), { stroke: '#a00000', 'stroke-width': 2, 'stroke-dasharray': '5 5' });
    series(p, FAST, -1, 4, (a, b) => {
        const t = Math.min(Math.round(Math.abs(a - b) / 15) / 6, 1);
        return a > b ? `rgb(${75 + 180 * t},0,0)` : `rgb(${60 * (1 - t)},${70 + 165 * t},0)`;
    });

    CANDLES.forEach(([high, top, bottom, low, c], i) => {
        const x = Math.floor(X(i)) + 0.5;
        const y = Math.round(p.Y(top)), h = Math.max(Math.round(p.Y(bottom)) - y, 1);
        add(s, 'line', { x1: x, x2: x, y1: p.Y(high), y2: p.Y(low), stroke: '#000' });
        add(s, 'rect', { x: x - 3, y: y + 0.5, width: 6, height: h, fill: COLORS[c], stroke: c === 'k' ? '#222' : '#000' });
    });
    add(s, 'rect', { x: X(182.4), y: p.Y(1464), width: 6, height: 2 });

    // Divergences and warnings
    [['#b01020', [[31, 853], [43, 825]]], ['#b01020', [[74, 1057], [95, 960]]], ['#b01020', [[96, 892], [99, 811], [109, 712]]],
    ['#109010', [[82, 1306], [85, 1369]]], ['#109010', [[147, 1573], [158, 1579], [170, 1705]]]
    ].forEach(([stroke, pts]) => poly(p, pts, { stroke }));
    [[147, 1640], [148, 1618], [149, 1576], [154, 1544], [155, 1565], [156, 1569], [157, 1562], [158, 1621], [159, 1596], [160, 1681], [161, 1610], [162, 1576], [170, 1800], [171, 1735]]
        .forEach(([i, u]) => add(s, 'circle', { cx: X(i + 0.15), cy: p.Y(u), r: 3.5, fill: '#c86e6e', 'fill-opacity': 0.8 }));

    // Elliott waves
    const wave = { stroke: '#6496f0' };
    poly(p, [[4, 222], [4, 555], [5, 440], [12, 1335], [13, 1157], [20, 1794], [50, 711], [85, 1422], [111, 592]], wave);
    poly(p, [[110, 597], [111, 795], [113, 705], [115, 1443], [137, 1033], [170, 1800]], wave);

    [['76,40 %', 171, '#60e860'], ['61,80 %', 247, '#2828d0'], ['50,00 %', 309, '#ff8050']]
        .forEach(([t, y, fill]) => add(s, 'text', { x: 615, y, fill }, t));

    [['2', 77, 135], ['1', 68, 196], ['4', 148, 371], ['3', 139, 456], ['5', 211, 610], ['A', 477, 224], ['B', 789, 486], ['C', 1019, 184],
    ['2', 1036, 222], ['1', 1019, 276], ['3', 1054, 492], ['4', 1249, 332], ['5', 1543, 610]].forEach(([t, x, y]) => {
        const w = t > '9' ? 14 : 12;
        add(s, 'rect', { x: x - 28 - w / 2, y: y - 31, width: w, height: 16, fill: '#fff', 'fill-opacity': 0.8, stroke: '#5f92f2' });
        add(s, 'text', { x: x - 28, y: y - 19, fill: '#5f92f2', 'text-anchor': 'middle', 'font-size': 11 }, t);
    });
    [['(A)', 318, 250], ['(C)', 451, 226], ['(B)', 380, 440], ['(A)', 513, 463], ['(B)', 699, 320], ['(C)', 762, 484],
    ['(A)', 913, 244], ['(B)', 930, 359], ['(C)', 992, 188], ['?', 1552, 601]].forEach(([t, x, y]) => {
        const w = t === '?' ? 14 : 21;
        add(s, 'rect', { x: x - 28 - w / 2, y: y - 32, width: w, height: 18, rx: 3, fill: '#fff', 'fill-opacity': 0.7, stroke: '#5f92f2' });
        add(s, 'text', { x: x - 28, y: y - 20, fill: '#222', 'text-anchor': 'middle', 'font-weight': 'normal' }, t);
    });

    // Alert level
    add(s, 'rect', { x: -1, y: 341.5, width: 39, height: 13, fill: '#fff', stroke: '#008000' });
    add(s, 'text', { x: 2, y: 352, fill: '#107010' }, '1,62600');
    add(s, 'rect', { x: 0, y: 354, width: '100%', height: 4, fill: '#008000' });

    const list = [];
    for (let k = 0; k <= 15; k++) {
        const v = (25 - k) / 10;
        if (v !== 1.3) list.push([String(v).replace('.', ','), Math.round(54 + k * 37.13)]);
    }
    labels(p, 23, list.concat([['1,30345', 498, '#108010', true], ['1,32782', 488, '#000', true], ['1,29307', 507, '#b01020', true]]));
}

/* ---------- Sistema de trenes ---------- */
const trenes = pane('trenes', 626);
const TRAIN = [1972,
    2005, 1985, 1970, 1943, 1980, 2065, 2200, 2235, 2238, 2245, 2265, 2266, 2263, 2245, 2239, 2234, 2237, 2243, 2250, 2264,
    2225, 2170, 2085, 2030, 1980, 1946, 1958, 1965, 1964, 1960, 1964, 1963, 1940, 1952, 2005, 2040, 2065, 2120, 2185, 2200,
    2175, 2125, 2050, 2004, 2017, 2085, 2145, 2125, 2107, 2069, 2080, 2120, 2190, 2233, 2223, 2223, 2227, 2225, 2170, 2095,
    2035, 2009, 2012, 2040, 2080, 2120, 2137, 2060, 2020, 1986, 2031, 2030, 2026, 2005, 1981, 2005, 2072, 2172, 2176, 2155,
    2138, 2178, 2192, 2185, 2192, 2204, 2206, 2182, 2167, 2090, 2010, 1928, 1953, 1958, 1965, 1940, 1940, 1958, 1986, 1985,
    1975, 1982, 2060, 2150, 2205, 2185, 2110, 2010, 1960, 1935, 1930, 1950, 1995, 2045, 2105, 2170, 2244, 2210, 2175, 2145,
    2150, 2170, 2160, 2125, 2067, 2048, 2057, 2070, 2068, 2070, 2068, 2065, 2095, 2145, 2120, 2025, 1940, 1926, 1955, 2030,
    2115, 2165, 2190, 2193, 2215, 2235, 2245, 2247, 2235, 2200, 2155, 2115, 2073, 2063, 2065, 2110, 2140, 2175, 2202, 2177,
    2152, 2115, 2095, 2010, 1965, 1952, 1985, 1992, 2030, 2120, 2177, 2181, 2130, 2080, 2072, 2050, 2030, 1995, 1962, 2005,
    2025, 2025, 1998];
const TREND = [
    2145, 2139, 2133, 2131, 2132, 2137, 2143, 2143, 2142, 2127, 2117, 2110, 2120, 2120, 2118, 2113, 2110, 2111, 2116, 2125,
    2128, 2123, 2116, 2110, 2105, 2107, 2117, 2125, 2125, 2122, 2121, 2116, 2100, 2075, 2067, 2060, 2052, 2030, 2010, 1998,
    2005, 1997, 1990, 1995, 2025, 2055, 2064, 2045, 2020, 1980, 1955, 1930, 1926, 1942, 1955, 1975, 2010, 2095, 2180, 2198,
    2175, 2148, 2163, 2183, 2191, 2182, 2168, 2160, 2162, 2170, 2170, 2165, 2158, 2156, 2165, 2178, 2178, 2158, 2135, 2120,
    2125, 2140, 2175, 2188, 2195, 2195, 2215, 2240, 2258, 2263, 2255, 2243, 2230, 2215, 2203, 2207, 2213, 2227, 2230, 2237,
    2242, 2239, 2237, 2233, 2232, 2215, 2200, 2188, 2192, 2195, 2205, 2220, 2236, 2236, 2223, 2208, 2207, 2202, 2203, 2195,
    2188, 2191, 2187, 2185, 2177];

function drawTrenes() {
    const p = trenes, s = p.svg, end = X(LAST);
    grid(p, [1984, 2058, 2131, 2203]);
    add(s, 'rect', { x: 0, y: p.Y(1912), width: end, height: 24, fill: '#d9f6d6' });
    add(s, 'rect', { x: 0, y: p.Y(2203), width: end, height: 24, fill: '#ffdcda' });
    [1912, 1984, 2203, 2275].forEach(u => level(p, u, '#000', 1));
    level(p, 2095, '#0a0a9c', 1.5, '5 4');

    const signal = average(TRAIN, 2), base = average(TREND, 5);
    between(p, TRAIN, signal, -1, 'rgba(60,190,60,.35)', 'rgba(240,60,60,.4)');
    between(p, TREND, base, 58, 'rgba(50,50,180,.3)', 'rgba(210,60,210,.32)');
    between(p, TREND.map(v => Math.max(v, 2203)), TREND.map(() => 2203), 58, 'none', 'rgba(130,60,20,.45)');
    between(p, TREND.map(v => Math.min(v, 1984)), TREND.map(() => 1984), 58, 'rgba(0,110,0,.45)', 'none');
    poly(p, signal.map((v, k) => [k - 1, v]), { stroke: '#333', 'stroke-dasharray': '3 3' });
    poly(p, base.slice(4).map((v, k) => [k + 62, v]), { stroke: '#222', 'stroke-width': 3, 'stroke-dasharray': '5 6' });
    series(p, TRAIN, -1, 1.5, (a, b) => a > b ? '#e02020' : '#000');
    series(p, TREND, 58, 4, (a, b) => a > b ? '#ff0000' : '#000096');

    [[4, 1965], [16, 2237], [26, 1950], [30, 1963], [33, 1950], [44, 2012], [50, 2078], [55, 2220], [62, 2010], [70, 2008], [75, 2000], [81, 2157], [84, 2188],
    [92, 1938], [96, 1938], [101, 1980], [111, 1946], [120, 2148], [126, 2054], [129, 2068], [131, 2065], [138, 1950], [154, 2063], [166, 1965], [179, 1982]
    ].forEach(([i, u]) => triangle(p, i, u, false, '#b40000', 5));
    [[1, 1998], [11, 2269], [20, 2247], [28, 1965], [31, 1968], [40, 2189], [47, 2135], [53, 2229], [57, 2223], [67, 2097], [71, 2035], [78, 2176], [82, 2190],
    [87, 2195], [95, 1953], [99, 1990], [105, 2195], [117, 2230], [122, 2167], [128, 2070], [130, 2070], [134, 2135], [148, 2245], [159, 2192], [172, 2160], [182, 2013]
    ].forEach(([i, u]) => triangle(p, i, u, true, '#0000b4', 5));

    labels(p, 626, [['100', 637, '#000', true], ['80', 656, '#000', true], ['60', 685], ['77,258', 665, '#000', true], ['72,746', 674, '#000', true],
        ['50', 698, '#0a0a9c', true], ['40', 709], ['37,533', 720, '#000096', true], ['24,736', 729, '#000', true], ['20', 738, '#000', true], ['0', 757, '#000', true]]);
}

/* ---------- Willy ---------- */
const willy = pane('willy', 765);
const WILLY = [
    2455, 2450, 2437, 2431, 2428, 2420, 2431, 2430, 2415, 2411, 2407, 2376, 2377, 2395, 2400, 2380, 2397, 2417, 2413, 2413,
    2409, 2390, 2380, 2373, 2385, 2378, 2355, 2339, 2358, 2330, 2350, 2398, 2396, 2402, 2400, 2403, 2400, 2393, 2387, 2387,
    2388, 2405, 2420, 2429, 2442, 2433, 2430, 2390, 2410, 2408, 2418, 2411, 2403, 2406, 2400, 2412, 2423, 2430, 2413, 2418,
    2428, 2447, 2458, 2452, 2472, 2466, 2452, 2455, 2463, 2437, 2400, 2370, 2379, 2347, 2344, 2317, 2332, 2337, 2340, 2321,
    2330, 2356, 2365, 2377, 2374, 2340, 2336, 2318, 2316, 2311, 2316, 2341, 2341, 2338, 2390, 2458, 2460, 2415, 2425, 2420,
    2443, 2448, 2432, 2433, 2425, 2423, 2432, 2433, 2426, 2430, 2422, 2420, 2442, 2443, 2420, 2413, 2410, 2400, 2418, 2436,
    2447, 2430, 2440, 2450, 2460, 2476, 2477, 2470, 2465, 2457, 2450, 2446, 2433, 2451, 2445, 2448, 2440, 2450, 2463, 2433,
    2451, 2452, 2435, 2414, 2410, 2410, 2418, 2419, 2430, 2458, 2457, 2437, 2431, 2423, 2432, 2419, 2421, 2422, 2400, 2412,
    2400, 2375, 2382];

function drawWilly() {
    const p = willy;
    grid(p, []);
    const bands = [
        ['#fda3a3', [[26, 26], [34, 34], [37, 37], [39, 39], [53, 53], [55, 55], [62, 64], [70, 70], [73, 73], [75, 77], [79, 82], [84, 84], [87, 88], [116, 116], [118, 118], [120, 121], [123, 123], [126, 127], [129, 129], [132, 132], [138, 140], [142, 146], [153, 153], [155, 155], [157, 158], [160, 161], [166, 166], [168, 170], [174, 174], [176, 176]]],
        ['#69c169', [[31, 31], [35, 35], [42, 42], [57, 57], [67, 67], [91, 91], [178, 178], [181, 181]]],
        ['#c26868', [[33, 33], [36, 36], [51, 51], [61, 61], [68, 68], [115, 115], [179, 179]]],
        ['#c1c1fb', [[43, 43], [45, 47], [49, 49], [58, 58], [93, 95], [99, 99], [104, 109], [113, 113]]]
    ];
    bands.forEach(([fill, list]) => list.forEach(([a, b]) => zone(p, a, b, fill)));
    level(p, 2311, '#000', 1, '5 4');
    level(p, 2479, '#000', 1, '5 4');
    level(p, 2353, '#8890d0', 3);
    level(p, 2353, '#00007c', 1);
    level(p, 2395, '#0a0a9c', 1.5, '5 4');
    level(p, 2437, '#e87070', 3);
    level(p, 2437, '#b80000', 1);
    between(p, WILLY.map(v => Math.max(v, 2437)), WILLY.map(() => 2437), 20, 'none', 'rgba(120,0,0,.4)');
    between(p, WILLY.map(v => Math.min(v, 2353)), WILLY.map(() => 2353), 20, 'rgba(0,130,0,.35)', 'none');
    series(p, WILLY, 20, 4, (a, b) => {
        if (a > 2438) return '#960000';
        if (a < 2353) return '#00c800';
        return a > b ? '#ff9600' : '#0000c8';
    });
    [30.2, 34.2, 41.2, 56.1, 66.2, 90.2, 177.1, 180.1].forEach(i => triangle(p, i, 2398, true, '#0000b4', 6));
    [32.2, 35.1, 50, 60, 67, 114, 178.1].forEach(i => triangle(p, i, 2393, false, '#b40000', 6));
    labels(p, 765, [['0', 771, '#000', true], ['-25', 782, '#000096', true], ['079', 793, '#ff9600', true, 17], ['-50', 798, '#000096', true], ['-75', 812, '#b80000', true], ['-100', 822, '#000', true]]);
}

/* ---------- Awesome ---------- */
const awesome = pane('awesome', 830);
const AO = [
    2760, 2720, 2695, 2665, 2645, 2630, 2618, 2620, 2603, 2577, 2568, 2547, 2515, 2520, 2550, 2555, 2558, 2585, 2608, 2615,
    2616, 2611, 2585, 2566, 2577, 2605, 2618, 2603, 2595, 2595, 2585, 2610, 2655, 2670, 2674, 2675, 2674, 2663, 2650, 2638,
    2633, 2627, 2626, 2627, 2630, 2633, 2627, 2605, 2592, 2597, 2600, 2603, 2600, 2597, 2596, 2597, 2610, 2620, 2621, 2617,
    2623, 2637, 2650, 2653, 2657, 2664, 2662, 2657, 2655, 2640, 2617, 2605, 2600, 2596, 2582, 2568, 2552, 2542, 2548, 2544,
    2541, 2550, 2565, 2585, 2602, 2600, 2588, 2577, 2568, 2562, 2559, 2562, 2570, 2577, 2600, 2655, 2710, 2711, 2685, 2681,
    2683, 2694, 2688, 2677, 2665, 2650, 2645, 2648, 2640, 2633, 2628, 2622, 2623, 2632, 2625, 2608, 2600, 2593, 2594, 2608,
    2630, 2633, 2634, 2640, 2655, 2670, 2685, 2692, 2695, 2685, 2667, 2653, 2643, 2640, 2647, 2649, 2647, 2645, 2647, 2640,
    2633, 2638, 2633, 2617, 2605, 2600, 2603, 2605, 2608, 2625, 2645, 2653, 2638, 2632, 2628, 2630, 2623, 2620, 2615, 2612,
    2613, 2605, 2596];
const EVO = [2705, 2715, 2719, 2720, 2729, 2742,
    2753, 2761, 2760, 2750, 2737, 2713, 2698, 2692, 2685, 2672, 2663, 2647, 2627, 2605, 2599, 2590, 2583, 2584, 2592, 2593,
    2598, 2602, 2585, 2573, 2561, 2557, 2558, 2561, 2571, 2577, 2573, 2575, 2593, 2610, 2630, 2650, 2655, 2653, 2653, 2649,
    2647, 2640, 2641, 2642, 2643, 2644, 2643, 2637, 2630, 2625, 2618, 2613, 2615, 2614, 2612, 2610, 2609, 2608, 2608, 2610,
    2617, 2622, 2628, 2634, 2640, 2647, 2651, 2652, 2650, 2645, 2640, 2632, 2625, 2615, 2606, 2596, 2587, 2580, 2572, 2562,
    2558, 2559, 2560, 2567, 2572, 2577, 2576, 2570, 2560, 2552, 2547, 2543, 2542, 2543, 2550, 2570, 2602, 2628, 2645, 2662,
    2664, 2662, 2663, 2668, 2672, 2663, 2659, 2660, 2659, 2661, 2659, 2656, 2655, 2653, 2652, 2651, 2648, 2640, 2633, 2630,
    2632, 2635, 2638, 2643, 2645, 2649, 2655, 2667, 2677, 2682, 2681, 2679, 2669, 2659, 2660, 2661, 2662, 2663, 2665, 2664,
    2664, 2663, 2660, 2653, 2645, 2635, 2629, 2626, 2623, 2627, 2635, 2645, 2650, 2649, 2643, 2635, 2629, 2626, 2622, 2620,
    2619, 2618, 2616];

// Bars from the zero line, each with a thin right edge
function histogram(p, data, start, color, edge) {
    const zero = p.Y(2617);
    for (let k = 1; k < data.length; k++) {
        const y = p.Y(data[k]), x = Math.floor(X(start + k)) - 3;
        const box = { y: Math.min(y, zero), height: Math.abs(y - zero) };
        add(p.svg, 'rect', Object.assign({ x, width: 6, fill: color(data[k], data[k - 1]) }, box));
        add(p.svg, 'rect', Object.assign({ x: x + 6, width: 1, fill: edge }, box));
    }
}

function drawAwesome() {
    const p = awesome;
    grid(p, [2511, 2565, 2669, 2722]);
    histogram(p, EVO, 14, (a, b) => a > b ? '#ffd2d2' : '#d2ffd2', '#e0a8a8');
    histogram(p, AO, 20, (a, b) => a < 2617 ? (a > b ? '#ff00ff' : '#0000ff') : (a > b ? '#ff0000' : '#009696'), '#222');
    level(p, 2617, '#1010f0', 2);
    series(p, AO, 20, 3, (a, b) => a > b ? '#b400b4' : '#05053c');
    series(p, EVO, 14, 3, (a, b) => a > b ? '#ff9600' : '#5cf860');
    [[37, 2582], [44, 2565], [77, 2617], [102, 2572], [141, 2633], [144, 2645], [170, 2640]].forEach(([i, u]) => triangle(p, i, u, false, '#f8f000', 5));
    [[21, 2737], [42, 2590], [58, 2652], [89, 2643], [124, 2665], [142, 2633], [150, 2670], [172, 2642]].forEach(([i, u]) => triangle(p, i, u, true, '#00f0f8', 5));
    labels(p, 830, [['0,4', 837], ['0,2', 853], ['0,0748', 858, '#000', true], ['0,0748', 864, '#0000c8', true], ['0138', 872, '#40d840', true, 8], ['0', 878, '#0000f0', true],
        ['-0,2', 889], ['-0,4', 907], ['-0,6', 919]]);
}

/* ---------- Barra ---------- */
const barra = pane('barra', 925);

function drawBarra() {
    const p = barra;
    zone(p, 0, LAST, '#fffd8c');
    [[0, 2], [4, 7], [20, 22], [28, 28], [31, 33], [35, 38], [42, 52], [67, 68], [70, 71], [81, 84], [92, 99], [101, 102], [105, 105], [107, 107], [111, 112],
    [114, 118], [132, 132], [134, 134], [141, 141], [145, 147], [153, 153], [159, 162], [169, 172], [180, 181]].forEach(([a, b]) => zone(p, a, b, '#40ff40'));
    grid(p, []);
    level(p, 2887, '#000', 1.5);
    add(p.svg, 'line', { x1: 0, x2: '100%', y1: 70.5, y2: 70.5, stroke: '#6e8793' });
    labels(p, 925, [['0,505', 930], ['0,5000', 962, '#000', true], ['0,495', 990]]);
}

function drawTimeAxis() {
    const svg = document.getElementById('time-axis');
    for (let year = 1980; year <= 2030; year += 2) {
        const x = Math.floor(X((year - 1980) * 4)) + 0.5;
        add(svg, 'path', { d: `M${x} 0v3`, stroke: '#6e8793' });
        if (year > 1980) add(svg, 'text', { x, y: 11, 'text-anchor': 'middle' }, year);
    }
}

drawPrice();
drawTrenes();
drawWilly();
drawAwesome();
drawBarra();
drawTimeAxis();
```
